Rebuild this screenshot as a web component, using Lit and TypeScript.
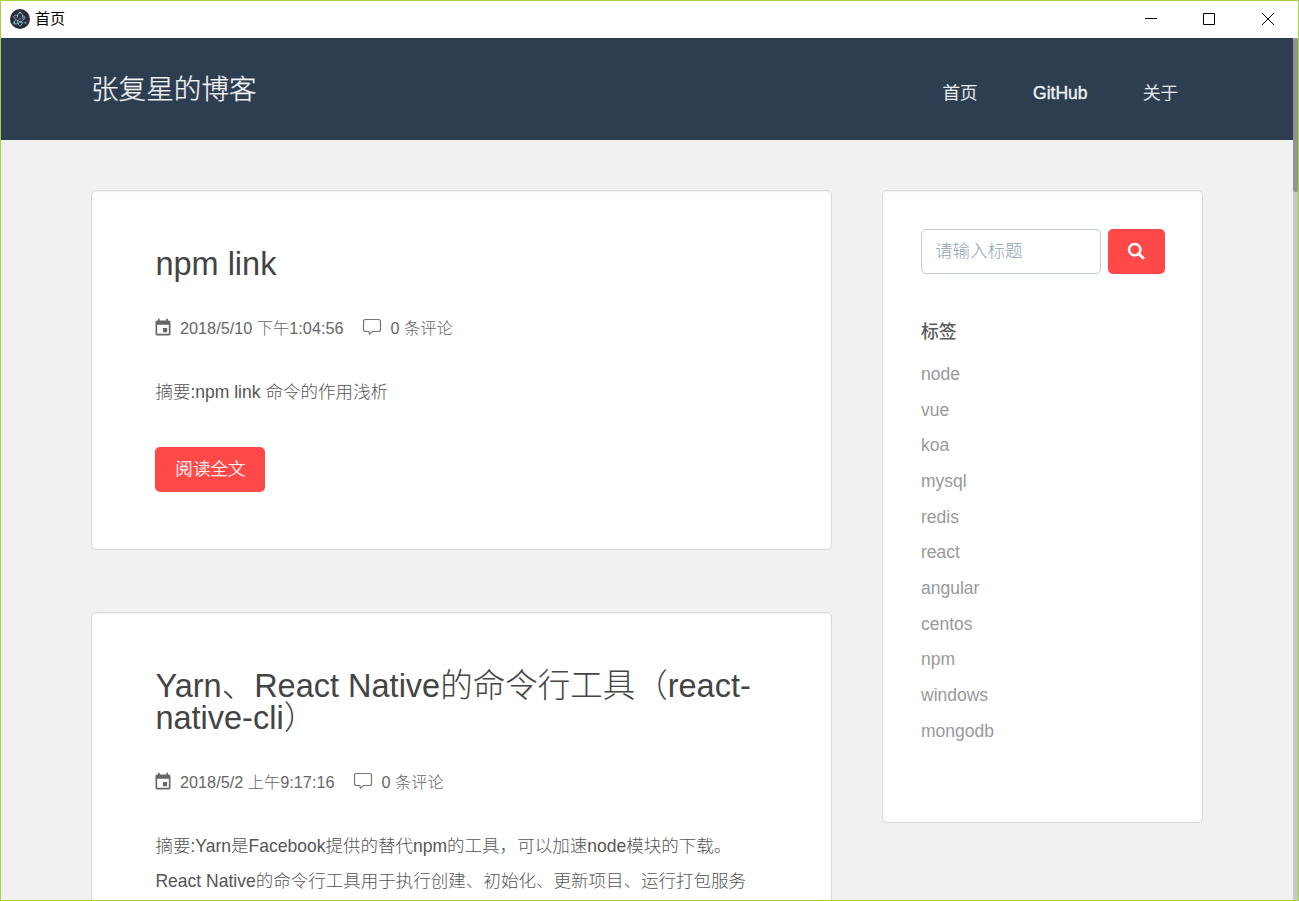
import { LitElement, html, css, svg, nothing } from "lit";
import { customElement, property } from "lit/decorators.js";

const calendarIcon = svg`<path fill="currentColor" d="M17 12h-5v5h5v-5zM16 1v2H8V1H6v2H5c-1.110 0-2 .9-2 2v14c0 1.100.89 2 2 2h14c1.100 0 2-.9 2-2V5c0-1.100-.9-2-2-2h-1V1h-2zm3 18H5V8h14v11z"/>`;

@customElement("window-bar")
class WindowBar extends LitElement {
  static styles = css`
    :host { display: flex; align-items: center; box-sizing: border-box; height: 37px; padding-bottom: 1px; background: #fff; color: #000; font-size: 15px; }
    .logo { width: 20px; height: 20px; margin-left: 9px; }
    .name { margin-left: 5px; line-height: 20px; flex: 1; font-weight: 400; }
    .control { width: 12px; height: 12px; margin-left: 46px; }
    .control.close { width: 14px; margin-right: 23px; }
  `;
  render() {
    return html`
      <svg class="logo" viewBox="0 0 20 20">
        <circle cx="10" cy="10" r="10" fill="#2b2e3a" />
        <g fill="none" stroke="#9feaf9" stroke-opacity=".75" stroke-width=".9" stroke-linecap="round">
          <path d="M7.800 6.300C5.800 6 4.300 6.200 3.900 7c-.6 1.100 1 3 3.900 4.700 1.500.9 3.100 1.500 4.500 1.800" />
          <path d="M5.500 11.100c-1.400 1.400-2 2.700-1.600 3.400.6 1.100 3.100.7 6-1 3.500-2 5.500-4.600 4.800-5.900-.4-.6-1.400-.8-2.800-.5" />
          <path d="M12.600 13.600c-.7 1.900-1.600 3.100-2.600 3.100-1.300 0-2.400-2.100-2.800-5.200" />
          <path d="M7.200 8.600c.4-3.100 1.500-5.300 2.800-5.300 1.700 0 3 3 3 6.700" />
        </g>
        <g fill="#9feaf9" fill-opacity=".8">
          <circle cx="10" cy="10" r=".8" /><circle cx="15.500" cy="13.800" r=".9" /><circle cx="4.500" cy="13.800" r=".9" /><circle cx="10" cy="3.600" r=".9" />
        </g>
      </svg>
      <span class="name">首页</span>
      <svg class="control" viewBox="0 0 12 12"><path d="M0 5.500h12" stroke="#000" /></svg>
      <svg class="control" viewBox="0 0 12 12"><path d="M.5.5h11v11H.5z" fill="none" stroke="#000" /></svg>
      <svg class="control close" viewBox="0 0 14 12"><path d="M1 0l12 12M13 0L1 12" stroke="#000" /></svg>
    `;
  }
}

@customElement("site-header")
class SiteHeader extends LitElement {
  static styles = css`
    :host { display: flex; box-sizing: border-box; height: 102px; padding: 0 115px 0 90px; background: #2d3e50; color: #f2f4f6; justify-content: space-between; }
    .brand { font-size: 27.600px; line-height: 103px; font-weight: 300; -webkit-text-stroke: 0.250px currentColor; }
    .menu { display: flex; gap: 55.500px; font-size: 17.500px; line-height: 111px; font-weight: 300; -webkit-text-stroke: 0.350px currentColor; }
  `;
  render() {
    return html`
      <span class="brand">张复星的博客</span>
      <nav class="menu"><span>首页</span><span>GitHub</span><span>关于</span></nav>
    `;
  }
}

@customElement("post-card")
class PostCard extends LitElement {
  @property() heading = "";
  @property() date = "";
  @property({ attribute: false }) summary: string[] = [];
  @property({ type: Boolean }) more = false;
  static styles = css`
    :host { display: block; box-sizing: border-box; min-height: 360px; padding: 57px 63px 0; border: 1px solid #d9d9d9; border-radius: 5px; background: #fff; box-shadow: inset 0 1px 2px rgba(0, 0, 0, 0.060); }
    .title { margin: 0; padding-left: 0.400px; font-size: 32.500px; line-height: 32.400px; font-weight: 300; color: #444; white-space: pre-line; }
    .meta { display: flex; align-items: center; height: 28px; margin-top: 33.600px; font-size: 16.250px; line-height: 28px; color: #666; white-space: nowrap; }
    .calendar { width: 20px; height: 20px; margin-left: -2px; margin-right: 7px; }
    .comment { width: 20px; height: 18px; margin: -3px 9px 0 18px; }
    .summary { margin: 32.600px 0 0; padding-left: 0.400px; font-size: 17.520px; line-height: 35.200px; color: #555; white-space: nowrap; }
    .more { display: block; width: 110px; height: 45px; margin-top: 37px; border-radius: 5px; background: #ff4949; color: #fff; font-size: 17.600px; line-height: 44px; text-align: center; text-indent: 1px; -webkit-text-stroke: 0.250px currentColor; }
  `;
  render() {
    return html`
      <h2 class="title">${this.heading}</h2>
      <div class="meta">
        <svg class="calendar" viewBox="0 0 24 24">${calendarIcon}</svg>
        <span>${this.date}</span>
        <svg class="comment" viewBox="0 0 20 18"><path d="M3.500 1.500h13q2 0 2 2v8q0 2-2 2h-6l-3 2.700-.6-2.700H3.500q-2 0-2-2v-8q0-2 2-2z" fill="none" stroke="#777" stroke-width="1.200" /></svg>
        <span>0 条评论</span>
      </div>
      <p class="summary">${this.summary.map((line) => html`${line}<br />`)}</p>
      ${this.more ? html`<span class="more">阅读全文</span>` : nothing}
    `;
  }
}

@customElement("side-panel")
class SidePanel extends LitElement {
  static styles = css`
    :host { display: block; box-sizing: border-box; width: 321px; height: 633px; padding: 38px 37px 0 38px; border: 1px solid #d9d9d9; border-radius: 5px; background: #fff; box-shadow: inset 0 1px 2px rgba(0, 0, 0, 0.060); }
    .search { display: flex; gap: 7px; }
    .field { box-sizing: border-box; width: 180px; height: 45px; padding: 0 13px; border: 1px solid #c0ccda; border-radius: 5px; font: 300 17.500px/42px "Liberation Sans", "Noto Sans CJK SC", sans-serif; color: #555; outline: none; }
    .field::placeholder { color: #8d9fb8; opacity: 1; }
    .go { display: flex; align-items: center; justify-content: center; width: 57px; height: 45px; border-radius: 5px; background: #ff4949; }
    .glass { width: 18px; height: 18px; margin: -2px 0 0 -1px; }
    .label { margin: 41px 0 0; font-size: 17.800px; line-height: 34px; font-weight: 500; color: #5a5a5a; }
    .tags { margin: 7.850px 0 0; padding: 0; list-style: none; font-size: 17.500px; line-height: 35.700px; color: #999; }
  `;
  render() {
    const tags = ["node", "vue", "koa", "mysql", "redis", "react", "angular", "centos", "npm", "windows", "mongodb"];
    return html`
      <div class="search">
        <input class="field" placeholder="请输入标题" />
        <span class="go">
          <svg class="glass" viewBox="0 0 18 18" fill="none" stroke="#fff"><circle cx="7.700" cy="7.700" r="5.700" stroke-width="2.500" /><path d="M12 12l4.100 4.100" stroke-width="2.800" stroke-linecap="round" /></svg>
        </span>
      </div>
      <h3 class="label">标签</h3>
      <ul class="tags">${tags.map((t) => html`<li>${t}</li>`)}</ul>
    `;
  }
}

@customElement("app-root")
class AppRoot extends LitElement {
  static styles = css`
    :host { display: flex; flex-direction: column; box-sizing: border-box; width: 1299px; height: 901px; border: 1px solid #a8d13f; overflow: hidden; background: #f1f1f1; font-family: "Liberation Sans", "Noto Sans CJK SC", sans-serif; font-weight: 300; }
    .viewport { display: flex; flex: 1; min-height: 0; overflow: hidden; }
    .page { flex: 1; min-width: 0; overflow: hidden; }
    .columns { display: flex; align-items: flex-start; justify-content: space-between; padding: 50px 90px 0; }
    .posts { display: flex; flex-direction: column; gap: 62px; width: 741px; }
    .scroll { width: 5px; background: #c8c8c8; }
    .thumb { height: 154px; border-radius: 2px; background: #939393; }
  `;
  render() {
    return html`
      <window-bar></window-bar>
      <div class="viewport">
        <div class="page">
          <site-header></site-header>
          <main class="columns">
            <div class="posts">
              <post-card more heading="npm link" date="2018/5/10 下午1:04:56" .summary=${["摘要:npm link 命令的作用浅析"]}></post-card>
              <post-card
                heading=${"Yarn、React Native的命令行工具（react-\nnative-cli）"}
                date="2018/5/2 上午9:17:16"
                .summary=${["摘要:Yarn是Facebook提供的替代npm的工具，可以加速node模块的下载。", "React Native的命令行工具用于执行创建、初始化、更新项目、运行打包服务"]}
              ></post-card>
            </div>
            <side-panel></side-panel>
          </main>
        </div>
        <div class="scroll"><div class="thumb"></div></div>
      </div>
    `;
  }
}
